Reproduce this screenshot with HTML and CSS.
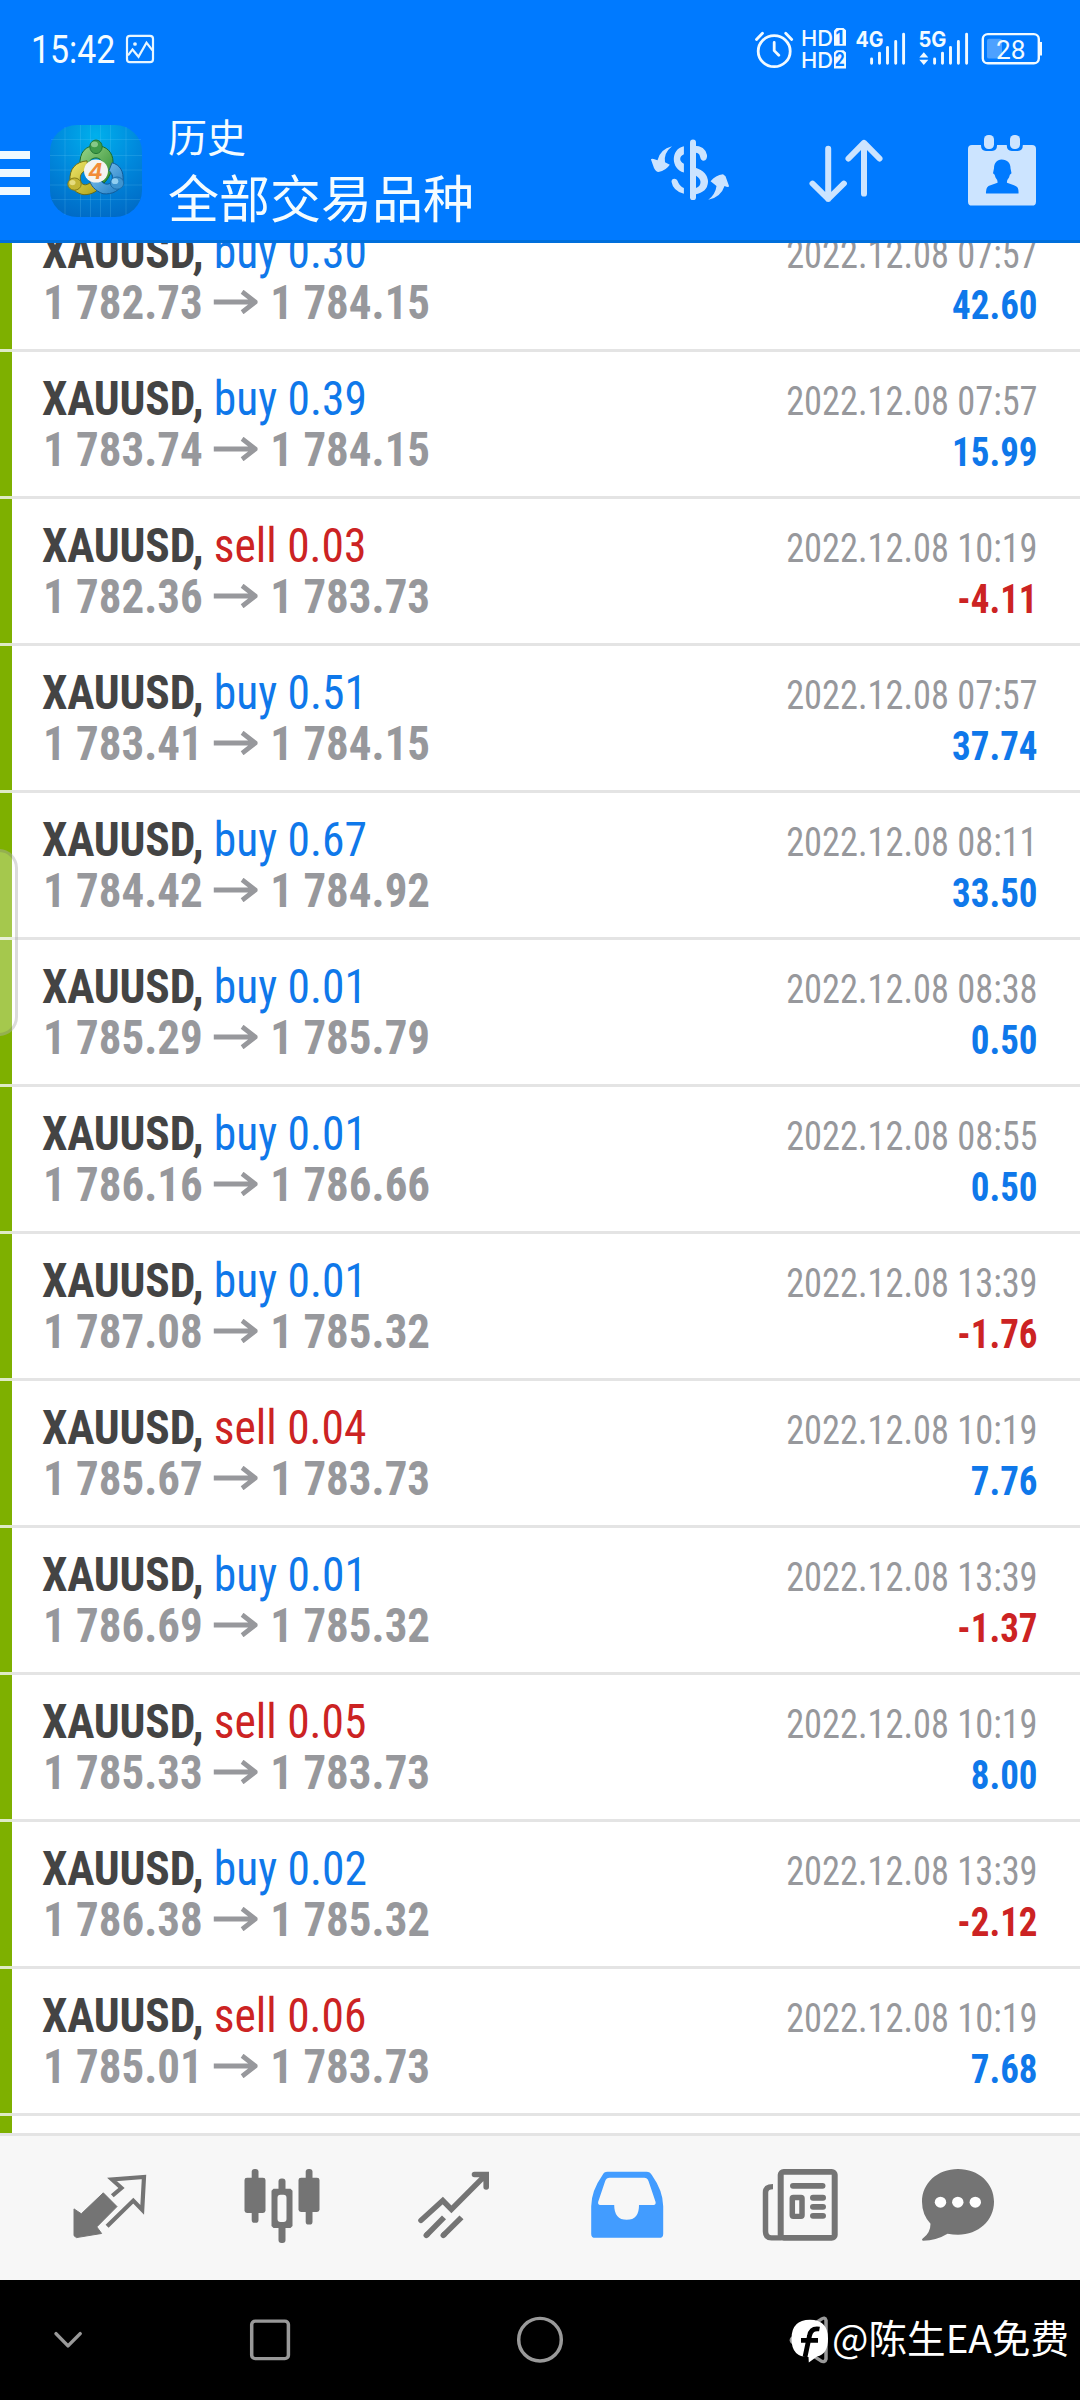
FILE: index.html
```
<!DOCTYPE html>
<html lang="zh-CN">
<head>
<meta charset="utf-8">
<title>历史</title>
<link rel="stylesheet" href="styles.css">
</head>
<body>
<div class="screen">
  <header class="top">
    <div class="status">
      <span class="clock">15:42</span>
      <svg class="st-photo" preserveAspectRatio="none" viewBox="125 35 30 31" width="30" height="30" fill="none" stroke="#e8f6ff" stroke-width="2.200"><rect x="127" y="37" width="26" height="27" rx="3"/><path d="M128 57l4.500-6 6 7.500 8-14.500 6 8"/><circle cx="135" cy="45.300" r="1.900" fill="#e8f6ff" stroke="none"/></svg>
      <svg class="st-right" preserveAspectRatio="none" viewBox="752 26 294 48" width="294" height="46.500" fill="#f2faff" font-family="Inter, sans-serif">
        <g fill="none" stroke="#f2faff" stroke-linecap="round" stroke-linejoin="round">
          <circle cx="774.200" cy="53" r="16" stroke-width="2.800"/>
          <path d="M756.500 41l6-6.500M785.700 34.500l6 6.500M774.200 44v8.500l4.600 4.700" stroke-width="2.800"/>
        </g>
        <text x="801" y="47.500" font-size="22.500" font-weight="500" textLength="32" lengthAdjust="spacingAndGlyphs">HD</text>
        <text x="801" y="70.500" font-size="22.500" font-weight="500" textLength="32" lengthAdjust="spacingAndGlyphs">HD</text>
        <path d="M836.500 29h7l2.500 2.500v16h-12v-15.500zM836.500 52h7l2.500 2.500v16.500h-12v-16.500z"/>
        <text x="835.500" y="45.800" font-size="19" font-weight="700" fill="#0079ff" textLength="8" lengthAdjust="spacingAndGlyphs">1</text>
        <text x="834.800" y="68.800" font-size="19" font-weight="700" fill="#0079ff" textLength="10" lengthAdjust="spacingAndGlyphs">2</text>
        <text x="855.500" y="48.300" font-size="22" font-weight="700" textLength="28" lengthAdjust="spacingAndGlyphs">4G</text>
        <text x="918.500" y="48.300" font-size="22" font-weight="700" textLength="28" lengthAdjust="spacingAndGlyphs">5G</text>
        <path fill="none" stroke="#f2faff" stroke-width="2.900" stroke-linecap="round" d="M871.600 61v4.500M879.500 55v10.500M887.500 49v16.500M895.700 43v22.500M903.600 35.500v30M934.600 61v4.500M942.500 55v10.500M950.500 49v16.500M958.400 43v22.500M966.600 35.500v30"/>
        <path d="M923.800 54l4.500 5.500h-9zM923.800 67.200l4.500-5.400h-9z"/>
        <rect x="982.800" y="35.500" width="56" height="30" rx="5" fill="none" stroke="#f2faff" stroke-width="2.400"/>
        <path d="M1039.500 43.500h2.500v14h-2.500z"/>
        <rect x="987" y="40.300" width="15" height="20.400" rx="2" fill="#4da1ff"/>
        <text x="996" y="61" font-size="27.500" font-family="Roboto, sans-serif" textLength="29.500" lengthAdjust="spacingAndGlyphs">28</text>
      </svg>
    </div>
    <div class="bar">
      <span class="burger"><i></i><i></i><i></i></span>
      <svg class="app-icon" preserveAspectRatio="none" viewBox="50 129 92 95" width="92" height="92">
        <defs>
          <radialGradient id="bg" cx=".5" cy=".12" r=".95"><stop offset="0" stop-color="#00b0ec"/><stop offset=".5" stop-color="#0088dc"/><stop offset="1" stop-color="#0068c4"/></radialGradient>
          <linearGradient id="gr" x2="1" y2="1"><stop offset="0" stop-color="#9ad68a"/><stop offset="1" stop-color="#2b8a2e"/></linearGradient>
          <linearGradient id="ye" x2="1" y2="1"><stop offset="0" stop-color="#f0e86c"/><stop offset="1" stop-color="#a99d12"/></linearGradient>
          <linearGradient id="bl" x2="1" y2="1"><stop offset="0" stop-color="#8fd0f5"/><stop offset="1" stop-color="#1b78c2"/></linearGradient>
        </defs>
        <rect x="50" y="129" width="92" height="95" rx="27" fill="url(#bg)"/>
        <path d="M65 131v91M80.500 129v95M90.500 129v95M100.500 129v95M110.500 129v95M126 131v91M51 144h90M50 160.500h92M50 175.500h92M50 191h92M52 206h88" stroke="#6fd0f5" stroke-opacity=".2" fill="none"/>
        <path d="M80 171C79 157 86 150 96 150.500C107 150 113 158 113 167C113 175 109 184 104 189L99 183C104 178 105 163 96 163C91 163 88 167 88 172z" fill="url(#gr)" stroke="#176a2c" stroke-width="1"/>
        <path d="M70 187C69 174 76 167 87 166L88 175C81 177 79 182 81 188C84 194 91 189 94 185L102 190C99 197 92 201 84 201C77 200 71 195 70 187z" fill="url(#ye)" stroke="#6d6b10" stroke-width="1"/>
        <path d="M112 168C120 170 124 177 123 187C121 197 112 201 103 200C95 197 90 191 89 184L99 184C103 191 109 192 112 187C114 182 111 178 109 176z" fill="url(#bl)" stroke="#115a96" stroke-width="1"/>
        <ellipse cx="96" cy="151.500" rx="6.200" ry="7" fill="#3f9b49" stroke="#1f7433"/><ellipse cx="94.500" cy="149" rx="3.500" ry="3" fill="#a5dba2" opacity=".7"/>
        <ellipse cx="74.500" cy="190" rx="6.700" ry="6.300" fill="#c4b634" stroke="#857a15"/><ellipse cx="72.500" cy="188.500" rx="3" ry="2.800" fill="#efe691" opacity=".8"/>
        <ellipse cx="117" cy="189" rx="6.700" ry="6.300" fill="#3f94cf" stroke="#1c6caa"/><ellipse cx="115" cy="187" rx="3.300" ry="3" fill="#a6dcf7" opacity=".8"/>
        <circle cx="96" cy="176.500" r="12" fill="#f4f3f0"/>
        <text x="95.500" y="184.500" font-family="Inter, sans-serif" font-size="22" font-weight="700" font-style="italic" text-anchor="middle" fill="#f28c38">4</text>
      </svg>
      <div class="titles"><div class="t1">历史</div><div class="t2">全部交易品种</div></div>
      <svg class="ic-money" preserveAspectRatio="none" viewBox="650 142 80 66" width="80" height="64" fill="#cce4ff">
        <rect x="690" y="143.500" width="6" height="62.500" rx="3"/>
        <path d="M683.900 150.500C670.500 153 670.500 174 683.900 177.700V168.500C679 166 679 161 683.900 158.700zM671.500 187q0-3 3-3 2 0 3 2 2 6 6.400 7.500v6Q673 196.500 671.500 187zM694 150Q705 150 707 159.500 707.500 165 703.500 165.500 701 165.500 700 161 699 156.500 694 157.500zM695 172.500Q708 177 708 187.500 707.500 198 695 200.300zM696 181v12.500Q700.500 192 700.500 187.500 700.500 184 696 181z" fill-rule="evenodd"/>
        <path d="M672 150.500Q663.500 157.500 665 167L669.800 169.500Q666 175.500 658.500 177Q656 177 654 173L650.900 164Q652 162.500 657.500 165Q660 153.500 672 150.500zM708.300 205.800Q715.500 200 716.500 191.500L710.600 186.500Q715.500 180.500 723 179.500L725.500 181.500L729 191.500Q729 193.500 724.500 191.500Q721 203 708.300 205.800z"/>
      </svg>
      <svg class="ic-sort" preserveAspectRatio="none" viewBox="809 142 76 68" width="76" height="65.800" fill="none" stroke="#cce4ff" stroke-width="6" stroke-linecap="round" stroke-linejoin="round"><path d="M828.200 153v52M812.500 189l15.700 16 15.700-16M864 199.500v-52.500M848.500 163.300l15.500-16.300 15.500 16.300"/></svg>
      <svg class="ic-cal" preserveAspectRatio="none" viewBox="966 137 72 77" width="72" height="74.500"><rect x="968" y="149.500" width="68" height="62.500" rx="4" fill="#cce4ff"/><path d="M981 147h16v3q0 5.500-5 5.500h-6q-5 0-5-5.500zM1006.800 147h16v3q0 5.500-5 5.500h-6q-5 0-5-5.500z" fill="#007aff"/><rect x="984" y="139" width="10" height="14.500" rx="4.500" fill="#cce4ff"/><rect x="1010" y="139" width="10" height="14.500" rx="4.500" fill="#cce4ff"/><path d="M1001.500 164.500c6 0 9 4 9 9l1 5q-2 1-2.500 4.500-2.500 3-2 5.500l7 2.500q5 1 4.500 8.500h-32.500q-.5-7.500 4.500-8.500l7-2.500q.5-2.500-2-5.500-.5-3.500-2.500-4.500l1-5c0-5 3-9 7.500-9z" fill="#007aff"/></svg>
    </div>
  </header>

  <main class="list">
    <div class="deal"><div class="info"><div class="name"><b>XAUUSD,</b> <span class="up">buy 0.30</span></div><div class="price"><span>1 782.73</span><svg class="arrow" viewBox="0 0 47 24"><path d="M0 12h44M30.500 1.800l14 10.200-14 10.200"/></svg><span>1 784.15</span></div></div><div class="side"><div class="date">2022.12.08 07:57</div><div class="sum up">42.60</div></div></div>
    <div class="deal"><div class="info"><div class="name"><b>XAUUSD,</b> <span class="up">buy 0.39</span></div><div class="price"><span>1 783.74</span><svg class="arrow" viewBox="0 0 47 24"><path d="M0 12h44M30.500 1.800l14 10.200-14 10.200"/></svg><span>1 784.15</span></div></div><div class="side"><div class="date">2022.12.08 07:57</div><div class="sum up">15.99</div></div></div>
    <div class="deal"><div class="info"><div class="name"><b>XAUUSD,</b> <span class="down">sell 0.03</span></div><div class="price"><span>1 782.36</span><svg class="arrow" viewBox="0 0 47 24"><path d="M0 12h44M30.500 1.800l14 10.200-14 10.200"/></svg><span>1 783.73</span></div></div><div class="side"><div class="date">2022.12.08 10:19</div><div class="sum down">-4.11</div></div></div>
    <div class="deal"><div class="info"><div class="name"><b>XAUUSD,</b> <span class="up">buy 0.51</span></div><div class="price"><span>1 783.41</span><svg class="arrow" viewBox="0 0 47 24"><path d="M0 12h44M30.500 1.800l14 10.200-14 10.200"/></svg><span>1 784.15</span></div></div><div class="side"><div class="date">2022.12.08 07:57</div><div class="sum up">37.74</div></div></div>
    <div class="deal"><div class="info"><div class="name"><b>XAUUSD,</b> <span class="up">buy 0.67</span></div><div class="price"><span>1 784.42</span><svg class="arrow" viewBox="0 0 47 24"><path d="M0 12h44M30.500 1.800l14 10.200-14 10.200"/></svg><span>1 784.92</span></div></div><div class="side"><div class="date">2022.12.08 08:11</div><div class="sum up">33.50</div></div></div>
    <div class="deal"><div class="info"><div class="name"><b>XAUUSD,</b> <span class="up">buy 0.01</span></div><div class="price"><span>1 785.29</span><svg class="arrow" viewBox="0 0 47 24"><path d="M0 12h44M30.500 1.800l14 10.200-14 10.200"/></svg><span>1 785.79</span></div></div><div class="side"><div class="date">2022.12.08 08:38</div><div class="sum up">0.50</div></div></div>
    <div class="deal"><div class="info"><div class="name"><b>XAUUSD,</b> <span class="up">buy 0.01</span></div><div class="price"><span>1 786.16</span><svg class="arrow" viewBox="0 0 47 24"><path d="M0 12h44M30.500 1.800l14 10.200-14 10.200"/></svg><span>1 786.66</span></div></div><div class="side"><div class="date">2022.12.08 08:55</div><div class="sum up">0.50</div></div></div>
    <div class="deal"><div class="info"><div class="name"><b>XAUUSD,</b> <span class="up">buy 0.01</span></div><div class="price"><span>1 787.08</span><svg class="arrow" viewBox="0 0 47 24"><path d="M0 12h44M30.500 1.800l14 10.200-14 10.200"/></svg><span>1 785.32</span></div></div><div class="side"><div class="date">2022.12.08 13:39</div><div class="sum down">-1.76</div></div></div>
    <div class="deal"><div class="info"><div class="name"><b>XAUUSD,</b> <span class="down">sell 0.04</span></div><div class="price"><span>1 785.67</span><svg class="arrow" viewBox="0 0 47 24"><path d="M0 12h44M30.500 1.800l14 10.200-14 10.200"/></svg><span>1 783.73</span></div></div><div class="side"><div class="date">2022.12.08 10:19</div><div class="sum up">7.76</div></div></div>
    <div class="deal"><div class="info"><div class="name"><b>XAUUSD,</b> <span class="up">buy 0.01</span></div><div class="price"><span>1 786.69</span><svg class="arrow" viewBox="0 0 47 24"><path d="M0 12h44M30.500 1.800l14 10.200-14 10.200"/></svg><span>1 785.32</span></div></div><div class="side"><div class="date">2022.12.08 13:39</div><div class="sum down">-1.37</div></div></div>
    <div class="deal"><div class="info"><div class="name"><b>XAUUSD,</b> <span class="down">sell 0.05</span></div><div class="price"><span>1 785.33</span><svg class="arrow" viewBox="0 0 47 24"><path d="M0 12h44M30.500 1.800l14 10.200-14 10.200"/></svg><span>1 783.73</span></div></div><div class="side"><div class="date">2022.12.08 10:19</div><div class="sum up">8.00</div></div></div>
    <div class="deal"><div class="info"><div class="name"><b>XAUUSD,</b> <span class="up">buy 0.02</span></div><div class="price"><span>1 786.38</span><svg class="arrow" viewBox="0 0 47 24"><path d="M0 12h44M30.500 1.800l14 10.200-14 10.200"/></svg><span>1 785.32</span></div></div><div class="side"><div class="date">2022.12.08 13:39</div><div class="sum down">-2.12</div></div></div>
    <div class="deal"><div class="info"><div class="name"><b>XAUUSD,</b> <span class="down">sell 0.06</span></div><div class="price"><span>1 785.01</span><svg class="arrow" viewBox="0 0 47 24"><path d="M0 12h44M30.500 1.800l14 10.200-14 10.200"/></svg><span>1 783.73</span></div></div><div class="side"><div class="date">2022.12.08 10:19</div><div class="sum up">7.68</div></div></div>
    <div class="deal"></div>
    <div class="edge-handle"></div>
  </main>

  <nav class="tabs">
    <svg preserveAspectRatio="none" viewBox="70 2170 80 80"><path fill="#747474" d="M103.300 2196.700l13.700 14.200-20.200 21 4.800 6.800-25.200 4.300-2.400-2v-27.700l7.300 5.100z" stroke="#747474" stroke-linejoin="round"/><path fill="none" stroke="#747474" stroke-width="4.200" d="M112.300 2199.800l9.200-8.200-9.500-8.800 32-2.500-1.800 34-8.900-9.500-26.200 26.500" stroke-linejoin="miter"/></svg>
    <svg preserveAspectRatio="none" viewBox="242.500 2170 80 80" fill="#747474"><rect x="244" y="2181" width="21" height="36.500" rx="2.500"/><rect x="251.200" y="2172" width="6.800" height="55.700" rx="3"/><rect x="298" y="2181" width="21" height="35.500" rx="2.500"/><rect x="305.200" y="2172" width="6.800" height="57.500" rx="3"/><path fill-rule="evenodd" d="M273 2192.600h17l2 2v36.400l-2 2h-17l-2-2v-36.400zM280 2198.800q-3 0-3 3v22q0 3 3 3h3q3 0 3-3v-22q0-3-3-3z"/><rect x="278" y="2182" width="7" height="14" rx="3"/><rect x="278" y="2229" width="7" height="19.500" rx="3"/></svg>
    <svg preserveAspectRatio="none" viewBox="415 2170 80 80" fill="none" stroke="#747474" stroke-width="5.600"><path stroke-linecap="round" d="M421 2225.200l21.800-20.500 8.600 9 33.600-34.700M474.500 2177.800h11.700v13"/><path d="M426.300 2240.600l17.700-18.600M443.300 2240.600l18.200-18.600"/><path stroke-linecap="round" d="M426.300 2240.600l1-1M443.300 2240.600l1-1"/></svg>
    <svg preserveAspectRatio="none" viewBox="587.500 2170 80 80"><path fill="#429cff" fill-rule="evenodd" d="M607 2175h39q3.500 0 5.500 3.500 11 16 11.200 32v28.700q0 4-4 4h-64q-4 0-4-4v-28.700q.2-16 11.200-32 1.500-3.500 5.100-3.500zM609 2181.200q-3 0-4.300 3.300l-7 21.500q-.7 3 2 3.300h14q0 15.300 12.500 15.300t12.300-15.300h14.500q2.800-.3 2-3.300l-7-21.500q-1.300-3.300-4.300-3.300z"/></svg>
    <svg preserveAspectRatio="none" viewBox="760 2170 80 80" fill="none" stroke="#747474" stroke-width="6"><rect x="780.700" y="2175" width="54" height="68.300" rx="3"/><path d="M773 2190.300q-7.500 0-7.500 6v40q0 7 6 7h10" stroke-width="5.500"/><path d="M793 2189.500h29.500M813 2201.800h10M813 2211.200h10M813 2220.500h10" stroke-linecap="round"/><rect x="792.300" y="2201.500" width="9.700" height="19.500" rx="1" stroke-width="5.500"/></svg>
    <svg preserveAspectRatio="none" viewBox="918 2170 80 80"><path fill="#747474" d="M958 2172c20.500 0 36 14.500 36 34s-15.500 34-36 34q-5 0-10.500-1-11 7-24.500 7.200-2-1 0-2.500 7.500-5.500 7.500-15-8.500-9.500-8.500-22.700c0-19.500 15.500-34 36-34z"/><g fill="#fff"><circle cx="940.500" cy="2206.400" r="5.700"/><circle cx="957.800" cy="2206.400" r="5.700"/><circle cx="975.300" cy="2206.400" r="5.700"/></g></svg>
  </nav>

  <footer class="sys">
    <svg class="s-down" preserveAspectRatio="none" viewBox="52 2337 32 22" width="32" height="21.300"><path d="M56 2341.800l12 12.600 12.200-12.600"/></svg>
    <svg class="s-square" preserveAspectRatio="none" viewBox="248 2325 44 48" width="44" height="46.500"><rect x="251.700" y="2329.300" width="36.700" height="38.700" rx="3.500"/></svg>
    <svg class="s-home" preserveAspectRatio="none" viewBox="515 2323 50 52" width="50" height="50.300"><ellipse cx="540" cy="2348.500" rx="21.300" ry="22"/></svg>
    <svg class="s-back" preserveAspectRatio="none" viewBox="786 2323 46 52" width="46" height="50.300"><path d="M826 2328.500v40q-1 4-5 2l-28-19q-3.500-2.500 0-5l28-19q4-3 5 1z"/><path d="M810 2328q18 0 18 19.500 0 16-11 18.300l-8.200 6.200-.3-5.500q-17 0-17-19 0-19.500 18.500-19.500z" fill="#fff" stroke="none"/><path d="M819.500 2337.500q-8.500-1.500-10 7l-4.500 22M801 2349.300h17" stroke="#000" stroke-width="4.800"/></svg>
    <span class="mark">@陈生EA免费</span>
  </footer>
</div>
</body>
</html>
```
FILE: styles.css
```
* { box-sizing: border-box; }
body { margin: 0; background: #fff; }
svg { display: block; flex: none; }

.screen {
  width: 1080px;
  height: 2400px;
  display: flex;
  flex-direction: column;
  overflow: hidden;
  font-family: "Roboto Condensed", "Noto Sans CJK SC", sans-serif;
}

/* status line and title bar */
.top {
  height: 243px;
  flex: none;
  background: #007aff;
  border-bottom: 3px solid #006fdc;
  color: #f4fcff;
}
.status {
  height: 97px;
  padding: 0 34px 0 31px;
  display: flex;
  align-items: center;
}
.clock {
  width: 94px;
  font: 400 38px/46px Roboto, sans-serif;
  transform: scaleX(.89);
  transform-origin: left;
  margin-top: 3px;
}
.st-right { margin-left: auto; }
.bar {
  height: 143px;
  display: flex;
  align-items: flex-start;
  padding-right: 42px;
}
.burger {
  width: 30px;
  margin-top: 54px;
  display: grid;
  gap: 10px;
}
.burger i { height: 8px; background: #f0f9ff; }
.app-icon { margin: 28px 0 0 20px; }
.titles {
  flex: 1;
  margin: 10px 0 0 26px;
  font-family: "Noto Sans CJK SC", sans-serif;
  font-weight: 400;
}
.t1 { font-size: 39px; line-height: 57px; }
.t2 { font-size: 51px; line-height: 64px; }
.ic-money { margin: 40.500px 79px 0 0; }
.ic-sort { margin: 40.500px 81px 0 0; }
.ic-cal { margin-top: 35.600px; }

/* deals */
.list {
  position: relative;
  height: 1890px;
  flex: none;
  overflow: hidden;
}
.deal {
  height: 147px;
  display: flex;
  justify-content: space-between;
  padding: 21px 42px 0 42px;
  background:
    linear-gradient(90deg, #dfeac6 12px, #e4e4e4 12px) bottom / 100% 3px no-repeat,
    linear-gradient(90deg, #7eb000 12px, #fff 12px);
}
.deal:first-child { margin-top: -38px; }
.name, .price {
  font-size: 48px;
  line-height: 51px;
  white-space: nowrap;
  transform-origin: left;
}
.name { color: #444; transform: scaleX(.947); }
.name b { letter-spacing: -.2px; }
.price {
  display: flex;
  align-items: center;
  margin-left: .5px;
  font-weight: 700;
  color: #97989c;
  transform: scaleX(.937);
}
.arrow {
  width: 47px;
  height: 24px;
  margin: 0 14px 2px 11px;
  fill: none;
  stroke: #97989c;
  stroke-width: 5;
}
.side { text-align: right; padding-top: 3px; }
.date, .sum {
  font-size: 40px;
  line-height: 51px;
  white-space: nowrap;
  transform-origin: right;
}
.date { color: #97989c; transform: scaleX(.909); }
.sum { font-weight: 700; transform: scaleX(.925); }
.up { color: #0f78ea; }
.down { color: #cc2323; }
.edge-handle {
  position: absolute;
  left: -20px;
  top: 606px;
  width: 38px;
  height: 187px;
  border: 3px solid rgba(90, 90, 90, .22);
  border-radius: 22px;
  background: rgba(255, 255, 255, .3);
}

/* bottom tabs */
.tabs {
  height: 147px;
  flex: none;
  border-top: 3px solid #e4e4e4;
  background: #f7f7f7;
  display: flex;
  gap: 92.500px;
  padding: 31px 0 0 70px;
}
.tabs svg { width: 80px; height: 77.400px; }
.tabs svg:last-child { margin-left: -14.500px; }

/* system navigation */
.sys {
  flex: 1;
  background: #000;
  display: flex;
  align-items: center;
  padding-left: 52px;
  fill: none;
  stroke: #999;
  stroke-width: 3.500;
  stroke-linecap: round;
  stroke-linejoin: round;
}
.s-square { margin-left: 164px; }
.s-home { margin-left: 223px; }
.s-back { margin-left: 221px; stroke-linecap: butt; }
.mark {
  color: #fff;
  font: 400 38.600px/56px "Noto Sans CJK SC", sans-serif;
  white-space: nowrap;
  margin-top: -9px;
}
```
